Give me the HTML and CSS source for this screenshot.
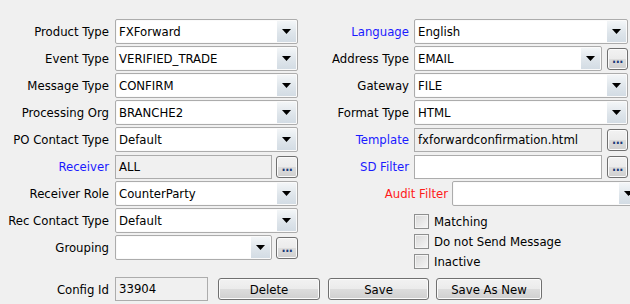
FILE: index.html
```html
<!DOCTYPE html>
<html>
<head>
<meta charset="utf-8">
<link rel="stylesheet" href="styles.css">
</head>
<body>
<div class="panel">
  <div class="cols">
    <div class="col left">
      <div class="row"><span class="lbl">Product Type</span><div class="combo w-full"><span class="val">FXForward</span><span class="arrow"></span></div></div>
      <div class="row"><span class="lbl">Event Type</span><div class="combo w-full"><span class="val">VERIFIED_TRADE</span><span class="arrow"></span></div></div>
      <div class="row"><span class="lbl">Message Type</span><div class="combo w-full"><span class="val">CONFIRM</span><span class="arrow"></span></div></div>
      <div class="row"><span class="lbl">Processing Org</span><div class="combo w-full"><span class="val">BRANCHE2</span><span class="arrow"></span></div></div>
      <div class="row"><span class="lbl">PO Contact Type</span><div class="combo w-full"><span class="val">Default</span><span class="arrow"></span></div></div>
      <div class="row"><span class="lbl blue">Receiver</span><div class="field ro w-short">ALL</div><button class="dots">...</button></div>
      <div class="row"><span class="lbl">Receiver Role</span><div class="combo w-full"><span class="val">CounterParty</span><span class="arrow"></span></div></div>
      <div class="row"><span class="lbl">Rec Contact Type</span><div class="combo w-full"><span class="val">Default</span><span class="arrow"></span></div></div>
      <div class="row"><span class="lbl">Grouping</span><div class="combo w-short"><span class="val"></span><span class="arrow"></span></div><button class="dots">...</button></div>
    </div>
    <div class="col right">
      <div class="row"><span class="lbl blue">Language</span><div class="combo w-rfull"><span class="val">English</span><span class="arrow"></span></div></div>
      <div class="row"><span class="lbl">Address Type</span><div class="combo w-rshort"><span class="val">EMAIL</span><span class="arrow"></span></div><button class="dots">...</button></div>
      <div class="row"><span class="lbl">Gateway</span><div class="combo w-rfull"><span class="val">FILE</span><span class="arrow"></span></div></div>
      <div class="row"><span class="lbl">Format Type</span><div class="combo w-rfull"><span class="val">HTML</span><span class="arrow"></span></div></div>
      <div class="row"><span class="lbl blue">Template</span><div class="field ro w-rshort">fxforwardconfirmation.html</div><button class="dots">...</button></div>
      <div class="row"><span class="lbl blue">SD Filter</span><div class="field w-rshort"></div><button class="dots">...</button></div>
      <div class="row audit"><span class="lbl red">Audit Filter</span><div class="combo w-audit"><span class="val"></span><span class="arrow"></span></div></div>
      <div class="checks">
        <label class="chk"><span class="box"></span>Matching</label>
        <label class="chk"><span class="box"></span>Do not Send Message</label>
        <label class="chk"><span class="box"></span>Inactive</label>
      </div>
    </div>
  </div>
  <div class="bottom">
    <span class="lbl">Config Id</span>
    <div class="field ro w-id">33904</div>
    <button class="btn b-del">Delete</button>
    <button class="btn b-save">Save</button>
    <button class="btn b-new">Save As New</button>
  </div>
</div>
</body>
</html>
```
FILE: styles.css
```css
html, body {
  margin: 0;
  padding: 0;
}
body {
  width: 630px;
  height: 304px;
  overflow: hidden;
  background: #f0f0f0;
  font-family: "DejaVu Sans Condensed", "DejaVu Sans", sans-serif;
  font-size: 13px;
  color: #000;
}
.panel {
  padding-top: 19px;
}
.cols {
  display: flex;
}
.col {
  display: flex;
  flex-direction: column;
  gap: 2px;
}
.left {
  width: 310px;
  flex: none;
}
.right {
  width: 320px;
  flex: none;
}
.row {
  display: flex;
  align-items: center;
  height: 25px;
}
.lbl {
  flex: none;
  text-align: right;
  white-space: nowrap;
}
.left .lbl {
  width: 109px;
  margin-right: 6px;
}
.right .lbl {
  width: 99px;
  margin-right: 5px;
}
.right .audit .lbl {
  width: 138px;
  margin-right: 4px;
}
.blue { color: #1a1aff; }
.red { color: #ff1a1a; }

.combo {
  display: flex;
  height: 25px;
  box-sizing: border-box;
  border: 1px solid #acacac;
  border-radius: 2px;
  background: #fff;
  box-shadow: inset 0 0 0 1px #fafafa;
  flex: none;
}
.combo .val {
  flex: 1;
  padding-left: 3px;
  line-height: 23px;
  white-space: nowrap;
  overflow: hidden;
}
.combo .arrow {
  width: 19px;
  margin: 1px;
  background: linear-gradient(#f3f6f8, #dde4ea 60%, #d3dce4);
  display: flex;
  align-items: center;
  justify-content: center;
}
.combo .arrow::after {
  content: "";
  width: 9px;
  height: 5px;
  background: #000;
  clip-path: polygon(0 0, 100% 0, 50% 100%);
}
.field {
  height: 24px;
  box-sizing: border-box;
  border: 1px solid #acacac;
  background: #fff;
  padding-left: 3px;
  line-height: 22px;
  white-space: nowrap;
  overflow: hidden;
  flex: none;
}
.field.ro {
  background: #f0f0f0;
}
.w-full { width: 183px; }
.w-short { width: 157px; }
.w-rfull { width: 214px; }
.w-rshort { width: 188px; }
.w-audit { width: 188px; }
.w-id { width: 93px; }

button {
  font-family: inherit;
  font-size: 13px;
  color: #000;
  padding: 0;
  margin: 0;
}
.dots {
  flex: none;
  width: 22px;
  height: 22px;
  margin-left: 4px;
  box-sizing: border-box;
  border: 1px solid #707070;
  border-radius: 3px;
  background: linear-gradient(#f2f2f2 0%, #ebebeb 50%, #dddddd 50%, #cfcfcf 100%);
  box-shadow: inset 0 0 0 1px #fbfbfb;
  color: #1c3b78;
  font-weight: bold;
  font-size: 12px;
  line-height: 18px;
  letter-spacing: -0.5px;
}
.right .dots {
  width: 21px;
  margin-left: 5px;
}
.checks {
  margin-top: 3px;
  display: flex;
  flex-direction: column;
}
.chk {
  display: flex;
  align-items: center;
  height: 20px;
  padding-left: 104px;
}
.box {
  width: 13px;
  height: 13px;
  border: 1px solid #8e8f8f;
  background: linear-gradient(135deg, #d8d8d8, #f6f6f6);
  box-shadow: inset 0 0 0 1px #f4f4f4;
  margin-right: 5px;
}
.bottom {
  display: flex;
  align-items: center;
  height: 24px;
  margin-top: 6px;
}
.bottom .lbl {
  width: 109px;
  margin-right: 6px;
}
.btn {
  height: 22px;
  box-sizing: border-box;
  border: 1px solid #707070;
  border-radius: 3px;
  background: linear-gradient(#f2f2f2 0%, #ebebeb 50%, #dddddd 50%, #cfcfcf 100%);
  box-shadow: inset 0 0 0 1px #fbfbfb;
}
.b-del { width: 102px; margin-left: 10px; }
.b-save { width: 101px; margin-left: 8px; }
.b-new { width: 106px; margin-left: 7px; }
```
